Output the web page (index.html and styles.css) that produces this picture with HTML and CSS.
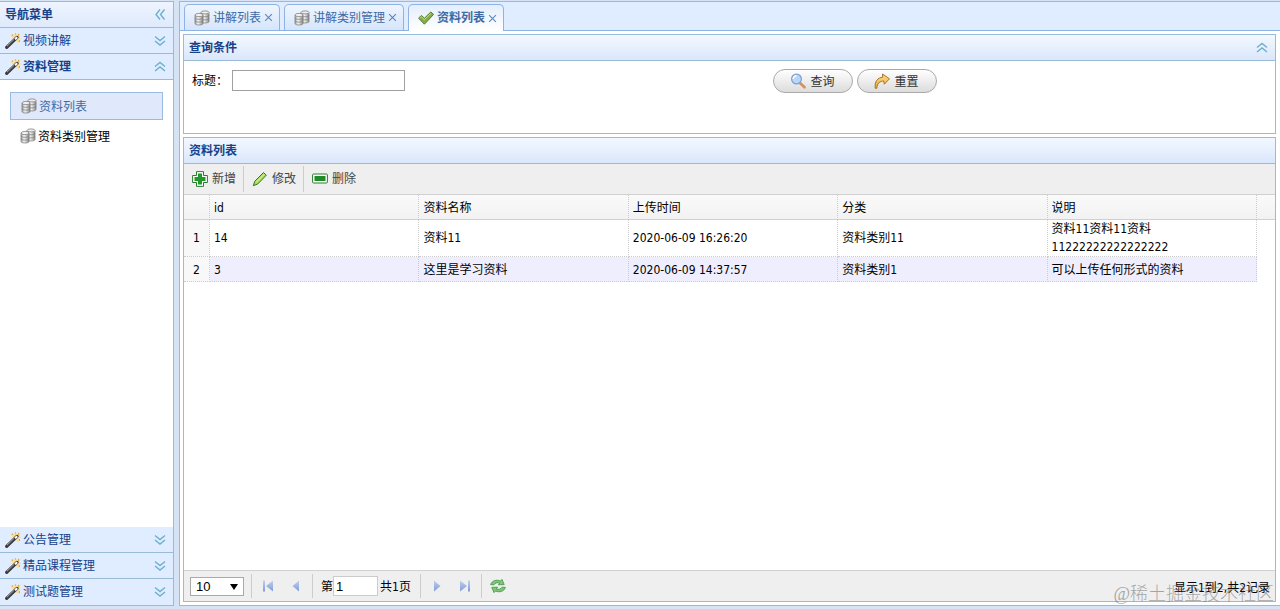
FILE: index.html
```
<!DOCTYPE html>
<html lang="zh-CN">

<head>
    <meta charset="UTF-8">
    <meta name="viewport" content="width=device-width, initial-scale=1.0">
    <title>资料列表</title>
    <link rel="stylesheet" href="styles.css">
</head>

<body>

    <!-- shared icons -->
    <svg class="sprite" xmlns="http://www.w3.org/2000/svg">
        <defs>
            <linearGradient id="goldFill" x1="0" y1="0" x2="0" y2="1">
                <stop offset="0" stop-color="#fbe08a" />
                <stop offset="1" stop-color="#e9a63a" />
            </linearGradient>
            <linearGradient id="blueFill" x1="0" y1="0" x2="0" y2="1">
                <stop offset="0" stop-color="#c3d0ee" />
                <stop offset="1" stop-color="#7f9bd6" />
            </linearGradient>
            <linearGradient id="greyFill" x1="0" y1="0" x2="1" y2="0">
                <stop offset="0" stop-color="#a4a4a4" />
                <stop offset="0.4" stop-color="#f4f4f4" />
                <stop offset="1" stop-color="#8a8a8a" />
            </linearGradient>
        </defs>
        <symbol id="wand" viewBox="0 0 16 16">
            <path d="M7 4.5 5.2 1.4 9 2.2 10.5 0 12 1.8 15.6.2 14.6 3.8 16 6 13.8 6.8 14.6 10.4 11 8.5z" fill="#f8dfa0" />
            <path d="M1.7 14.3 12 4.4" stroke="#3a3a3a" stroke-width="3.2" stroke-linecap="round" />
            <path d="M2 13.2 9 6.4" stroke="#aaa" stroke-width="1" />
            <path d="M10 6.3 12.2 4.2" stroke="#fff" stroke-width="2" />
            <path d="M13.6.8v2M14.4 7v2M7.4 1.4v1.4M10.4.4v1.2" stroke="#e0a030" stroke-width="1" />
        </symbol>
        <symbol id="database" viewBox="0 0 16 16">
            <g stroke="#777" stroke-width=".7" fill="url(#greyFill)">
                <path d="M7 2.4v9.2c0 1.8 8 1.8 8 0V2.4z" />
                <ellipse cx="11" cy="2.4" rx="4" ry="1.5" fill="#eee" />
                <path d="M7 5.4c0 1.8 8 1.8 8 0M7 8.5c0 1.8 8 1.8 8 0" fill="none" />
                <path d="M1 5v8.5c0 2 8 2 8 0V5z" />
                <ellipse cx="5" cy="5" rx="4" ry="1.6" fill="#f2f2f2" />
                <path d="M1 7.8c0 2 8 2 8 0M1 10.6c0 2 8 2 8 0" fill="none" />
            </g>
        </symbol>
        <symbol id="check" viewBox="0 0 16 16">
            <path d="M.6 8.2 3.4 5.4l3 2.8L12.8 2l2.8 2.4-9.200 9.800z" fill="#85ad4c" stroke="#557c2c" stroke-linejoin="round" />
            <path d="M2 8.2 3.4 6.800l3 2.800 6.400-6.200" fill="none" stroke="#c3de94" />
        </symbol>
        <symbol id="chevronDown" viewBox="0 0 16 16">
            <path d="M3 3.5l5 4 5-4M3 8l5 4 5-4" fill="none" stroke="#6db0cc" stroke-width="1.4" />
        </symbol>
        <symbol id="chevronUp" viewBox="0 0 16 16">
            <path d="M3 7.500l5-4 5 4M3 12l5-4 5 4" fill="none" stroke="#6db0cc" stroke-width="1.4" />
        </symbol>
        <symbol id="chevronLeft" viewBox="0 0 16 16">
            <path d="M8 2.500l-4 5 4 5M12.500 2.500l-4 5 4 5" fill="none" stroke="#6db0cc" stroke-width="1.4" />
        </symbol>
    </svg>

    <aside class="sidebar">
        <div class="bar side-title">
            <span>导航菜单</span>
            <button class="tool" aria-label="收起菜单"><svg><use href="#chevronLeft" /></svg></button>
        </div>
        <button class="bar side-item"><svg><use href="#wand" /></svg><span>视频讲解</span><svg><use href="#chevronDown" /></svg></button>
        <button class="bar side-item open"><svg><use href="#wand" /></svg><span>资料管理</span><svg><use href="#chevronUp" /></svg></button>
        <nav class="side-links">
            <a class="current" href="#list"><svg><use href="#database" /></svg><span>资料列表</span></a>
            <a href="#type"><svg><use href="#database" /></svg><span>资料类别管理</span></a>
        </nav>
        <button class="bar side-item"><svg><use href="#wand" /></svg><span>公告管理</span><svg><use href="#chevronDown" /></svg></button>
        <button class="bar side-item"><svg><use href="#wand" /></svg><span>精品课程管理</span><svg><use href="#chevronDown" /></svg></button>
        <button class="bar side-item"><svg><use href="#wand" /></svg><span>测试题管理</span><svg><use href="#chevronDown" /></svg></button>
    </aside>

    <main class="content">
        <div class="tabs">
            <div class="tab">
                <a href="#tab1"><svg><use href="#database" /></svg>讲解列表</a>
                <button class="close" aria-label="关闭"><svg viewBox="0 0 8 8"><path d="M1 1l6 6M7 1 1 7" /></svg></button>
            </div>
            <div class="tab">
                <a href="#tab2"><svg><use href="#database" /></svg>讲解类别管理</a>
                <button class="close" aria-label="关闭"><svg viewBox="0 0 8 8"><path d="M1 1l6 6M7 1 1 7" /></svg></button>
            </div>
            <div class="tab active">
                <a href="#tab3"><svg><use href="#check" /></svg>资料列表</a>
                <button class="close" aria-label="关闭"><svg viewBox="0 0 8 8"><path d="M1 1l6 6M7 1 1 7" /></svg></button>
            </div>
        </div>

        <section class="panel">
            <div class="bar panel-title">
                <span>查询条件</span>
                <button class="tool" aria-label="折叠"><svg><use href="#chevronUp" /></svg></button>
            </div>
            <form class="search">
                <div class="field">
                    <label for="title">标题：</label>
                    <input id="title" type="text">
                </div>
                <div class="search-btns">
                    <button class="pill" type="button">
                        <svg viewBox="0 0 16 16">
                            <path d="M10 10l4.5 4.3" stroke="#d98c5f" stroke-width="2.6" stroke-linecap="round" />
                            <circle cx="6.5" cy="6" r="4.9" fill="#b9d7f5" stroke="#7f9fd0" stroke-width="1.2" />
                            <path d="M3.3 6c0-2 1.4-3.2 3.2-3.2" fill="none" stroke="#fff" stroke-width="1.4" />
                        </svg><span>查询</span>
                    </button>
                    <button class="pill" type="button">
                        <svg viewBox="0 0 16 16">
                            <path d="M1.3 15.3C.3 8.800 3.5 4.5 8.800 4.200L8.500 1l7 4.800-5.200 5.400-.6-3.200C6 8 3 10.500 2.800 15.300z" fill="url(#goldFill)" stroke="#a8742a" stroke-linejoin="round" />
                        </svg><span>重置</span>
                    </button>
                </div>
            </form>
        </section>

        <section class="panel grid-panel">
            <div class="bar panel-title"><span>资料列表</span></div>
            <div class="toolbar">
                <button>
                    <svg viewBox="0 0 16 16">
                        <path d="M4.500.6h7v3.900h3.900v7h-3.900v3.900h-7v-3.900H.6v-7h3.900z" fill="#fff" stroke="#2b7d2b" stroke-linejoin="round" />
                        <path d="M6 2.500h4V6h3.500v4H10v3.500H6V10H2.500V6H6z" fill="#1f9a28" />
                    </svg>新增
                </button>
                <button>
                    <svg viewBox="0 0 16 16">
                        <path d="M1.3 14.7l1.500-4.500L11.500 1.500l2.800 2.700-8.700 8.900z" fill="#a4dd55" stroke="#357a1f" stroke-linejoin="round" />
                        <path d="M4 11.500l8-8" stroke="#e6f8bd" />
                    </svg>修改
                </button>
                <button>
                    <svg viewBox="0 0 16 16">
                        <rect x=".6" y="3" width="14.800" height="9" rx="1" fill="#fff" stroke="#2b7d2b" />
                        <path d="M2.500 5h11v5h-11z" fill="#1f8a28" />
                    </svg>删除
                </button>
            </div>
            <div class="grid-view">
                <table>
                    <colgroup>
                        <col class="col-num">
                        <col span="5">
                        <col class="col-rest">
                    </colgroup>
                    <thead>
                        <tr>
                            <th></th>
                            <th>id</th>
                            <th>资料名称</th>
                            <th>上传时间</th>
                            <th>分类</th>
                            <th>说明</th>
                            <th></th>
                        </tr>
                    </thead>
                    <tbody>
                        <tr>
                            <td>1</td>
                            <td>14</td>
                            <td>资料11</td>
                            <td>2020-06-09 16:26:20</td>
                            <td>资料类别11</td>
                            <td>资料11资料11资料<br>11222222222222222</td>
                            <td></td>
                        </tr>
                        <tr class="alt">
                            <td>2</td>
                            <td>3</td>
                            <td>这里是学习资料</td>
                            <td>2020-06-09 14:37:57</td>
                            <td>资料类别1</td>
                            <td>可以上传任何形式的资料</td>
                            <td></td>
                        </tr>
                    </tbody>
                </table>
            </div>
            <div class="pager">
                <span class="select-wrap">
                    <select aria-label="每页条数">
                        <option>10</option>
                        <option>20</option>
                        <option>50</option>
                    </select>
                </span>
                <span class="sep"></span>
                <button aria-label="首页"><svg viewBox="0 0 16 16"><path d="M3 2.500h2v11H3zM13 2.500v11L6 8z" fill="url(#blueFill)" /></svg></button>
                <button aria-label="上一页"><svg viewBox="0 0 16 16"><path d="M11 2.500v11L4.500 8z" fill="url(#blueFill)" /></svg></button>
                <span class="sep"></span>
                <label for="page">第</label><input id="page" type="text" value="1"><span class="total">共1页</span>
                <span class="sep"></span>
                <button aria-label="下一页"><svg viewBox="0 0 16 16"><path d="M5 2.500v11L11.500 8z" fill="url(#blueFill)" /></svg></button>
                <button aria-label="末页"><svg viewBox="0 0 16 16"><path d="M3 2.500v11L10 8zM11 2.500h2v11h-2z" fill="url(#blueFill)" /></svg></button>
                <span class="sep"></span>
                <button aria-label="刷新">
                    <svg viewBox="0 0 16 16">
                        <g fill="#7ccb74" stroke="#3b8f42" stroke-width=".8" stroke-linejoin="round">
                            <path d="M.6 6.600C2 2.600 6.500 1.200 10.400 3l1.600-1.600 2.200 5.200-5.800.2 1.400-1.600C7.200 4.200 5 4.800 4 6.800z" />
                            <path d="M15.400 9.400c-1.400 4-5.900 5.400-9.800 3.600L4 14.600 1.800 9.400l5.800-.2-1.400 1.600c2.600 1 4.800.4 5.800-1.600z" />
                        </g>
                    </svg>
                </button>
                <span class="info">显示1到2,共2记录</span>
            </div>
        </section>
    </main>

    <div class="watermark">@稀土掘金技术社区</div>

</body>

</html>
```
FILE: styles.css
```
* {
    box-sizing: border-box;
}

body {
    margin: 0;
    padding: 1px 0 3px;
    height: 100vh;
    display: flex;
    gap: 5px;
    background: #d6e3f5;
    color: #000;
    font-family: "DejaVu Sans Condensed", "Noto Sans CJK SC", sans-serif;
    font-size: 12px;
    line-height: 18px;
}

button,
input,
select {
    margin: 0;
    font: inherit;
    color: inherit;
}

button {
    padding: 0;
    border: 0;
    background: none;
    cursor: pointer;
}

a {
    color: inherit;
    text-decoration: none;
}

svg {
    display: block;
    flex: none;
    width: 16px;
    height: 16px;
}

.sprite {
    position: absolute;
    width: 0;
    height: 0;
}

.bar {
    display: flex;
    align-items: center;
    width: 100%;
    height: 26px;
    padding: 0 5px;
    color: #15428b;
    border-bottom: 1px solid #99bbd8;
}

.bar span {
    flex: 1;
    text-align: left;
}

/* left menu */
.sidebar {
    flex: none;
    width: 174px;
    display: flex;
    flex-direction: column;
    background: #fff;
    border: 1px solid #99bbd8;
    border-left: 0;
}

.side-title,
.panel-title {
    font-weight: bold;
    background: linear-gradient(#f3f8ff, #dae7fb);
}

.side-title {
    background: linear-gradient(#eef4ff, #deeafc);
}

.side-item {
    background: #e0ecff;
}

.side-item span {
    padding-left: 2px;
}

.side-item.open {
    font-weight: bold;
}

.side-item:last-child {
    border-bottom: 0;
}

.side-links {
    flex: 1;
    padding: 12px 10px;
}

.side-links a {
    display: flex;
    align-items: center;
    gap: 2px;
    height: 28px;
    padding: 0 9px;
    border: 1px solid transparent;
}

.side-links a + a {
    margin-top: 2px;
}

.side-links span {
    padding-top: 2px;
}

.side-links .current {
    padding: 0 10px;
    color: #416aa3;
    background: #dfe9fb;
    border-color: #99bbe0;
}

/* tabs */
.content {
    flex: 1;
    min-width: 0;
    display: flex;
    flex-direction: column;
    gap: 3px;
    padding: 0 4px 3px 3px;
    background: #fff;
    border: 1px solid #99bbd8;
    border-right: 0;
}

.tabs {
    display: flex;
    align-items: flex-end;
    gap: 4px;
    height: 29px;
    margin: 0 -4px 0 -3px;
    padding-left: 4px;
    background: #e0ecff;
    border-bottom: 1px solid #8db2e3;
}

.tab {
    display: flex;
    align-items: center;
    gap: 3px;
    height: 26px;
    padding: 0 6px 0 9px;
    color: #416aa3;
    background: linear-gradient(#eff5ff, #d6e5fb);
    border: 1px solid #8db2e3;
    border-bottom: 0;
    border-radius: 5px 5px 0 0;
}

.tab a {
    display: flex;
    align-items: center;
    gap: 3px;
}

.tab.active {
    height: 27px;
    margin-bottom: -1px;
    font-weight: bold;
    background: linear-gradient(#e4eefd, #fff);
}

.close svg {
    width: 9px;
    height: 9px;
    stroke: #5c86bd;
    stroke-width: 1;
}

/* panels */
.panel {
    border: 1px solid #99bbd8;
}

.search {
    display: flex;
    height: 72px;
    padding: 8px;
}

.field {
    flex: 1;
    display: flex;
    align-items: flex-start;
    gap: 4px;
    line-height: 24px;
}

.field input {
    width: 173px;
    height: 21px;
    margin-top: 1px;
    padding: 0 4px;
    border: 1px solid #a0a0a0;
}

.search-btns {
    flex: 0 0 46%;
    display: flex;
    align-items: flex-start;
    gap: 4px;
}

.pill {
    display: flex;
    align-items: center;
    justify-content: center;
    gap: 4px;
    width: 80px;
    height: 24px;
    color: #333;
    background: linear-gradient(#fff, #dcdcdc);
    border: 1px solid #a9a9a9;
    border-radius: 12px;
}

.pill span {
    padding-top: 2px;
}

.grid-panel {
    flex: 1;
    display: flex;
    flex-direction: column;
}

.toolbar {
    display: flex;
    align-items: center;
    height: 31px;
    padding: 2px 0;
    color: #444;
    background: #efefef;
    border-bottom: 1px solid #d0d0d0;
}

.toolbar button {
    display: flex;
    align-items: center;
    gap: 4px;
    height: 26px;
    padding: 0 7px 0 8px;
}

.toolbar button + button {
    border-left: 1px solid #ccc;
}

/* data grid */
.grid-view {
    flex: 1;
}

table {
    width: 100%;
    table-layout: fixed;
    border-collapse: separate;
    border-spacing: 0;
}

.col-num {
    width: 26px;
}

.col-rest {
    width: 18px;
}

th,
td {
    height: 25px;
    padding: 1px 4px 0;
    font-weight: normal;
    text-align: left;
    border-right: 1px dotted #ccc;
    border-bottom: 1px dotted #ccc;
}

td {
    padding: 0 4px;
}

th {
    background: linear-gradient(#fafafa, #f2f2f2);
    border-bottom: 1px solid #d0d0d0;
}

td:first-child {
    padding: 0;
    text-align: center;
    background: #f8f8f8;
}

.alt td {
    padding-top: 1px;
    background: #eeeeff;
}

.alt td:first-child {
    background: #f8f8f8;
}

th:last-child {
    border-right: 0;
}

tr td:last-child {
    background: none;
    border: 0;
}

/* paging bar */
.pager {
    display: flex;
    align-items: center;
    height: 31px;
    padding: 0 5px 0 6px;
    background: #efefef;
    border-top: 1px solid #d0d0d0;
}

.pager button {
    padding: 0 6px;
}

.sep {
    width: 1px;
    height: 24px;
    margin: 0 2px;
    background: #ccc;
}

.select-wrap {
    position: relative;
    margin-right: 5px;
}

.select-wrap::after {
    content: "";
    position: absolute;
    top: 7px;
    right: 6px;
    border: 4px solid transparent;
    border-top: 6px solid #000;
    border-bottom: 0;
    pointer-events: none;
}

.pager select,
.pager input {
    font-family: "Liberation Sans", sans-serif;
    font-size: 13px;
}

.pager select {
    display: block;
    width: 54px;
    height: 19px;
    padding: 0 5px;
    line-height: 17px;
    appearance: none;
    background: #fff;
    border: 1px solid #a9a9a9;
    border-radius: 0;
}

.pager label {
    padding: 2px 0 0 6px;
}

.pager input {
    width: 45px;
    height: 20px;
    padding: 0 2px;
    border: 1px solid #ccc;
}

.total {
    padding: 2px 7px 0 2px;
}

.info {
    margin-left: auto;
    padding-top: 4px;
}

.watermark {
    position: absolute;
    right: 6px;
    bottom: 3px;
    color: rgba(90, 90, 90, 0.5);
    font-family: "Liberation Serif", "Noto Sans CJK SC", serif;
    font-size: 18px;
    font-weight: 300;
    line-height: 24px;
    pointer-events: none;
}
```
